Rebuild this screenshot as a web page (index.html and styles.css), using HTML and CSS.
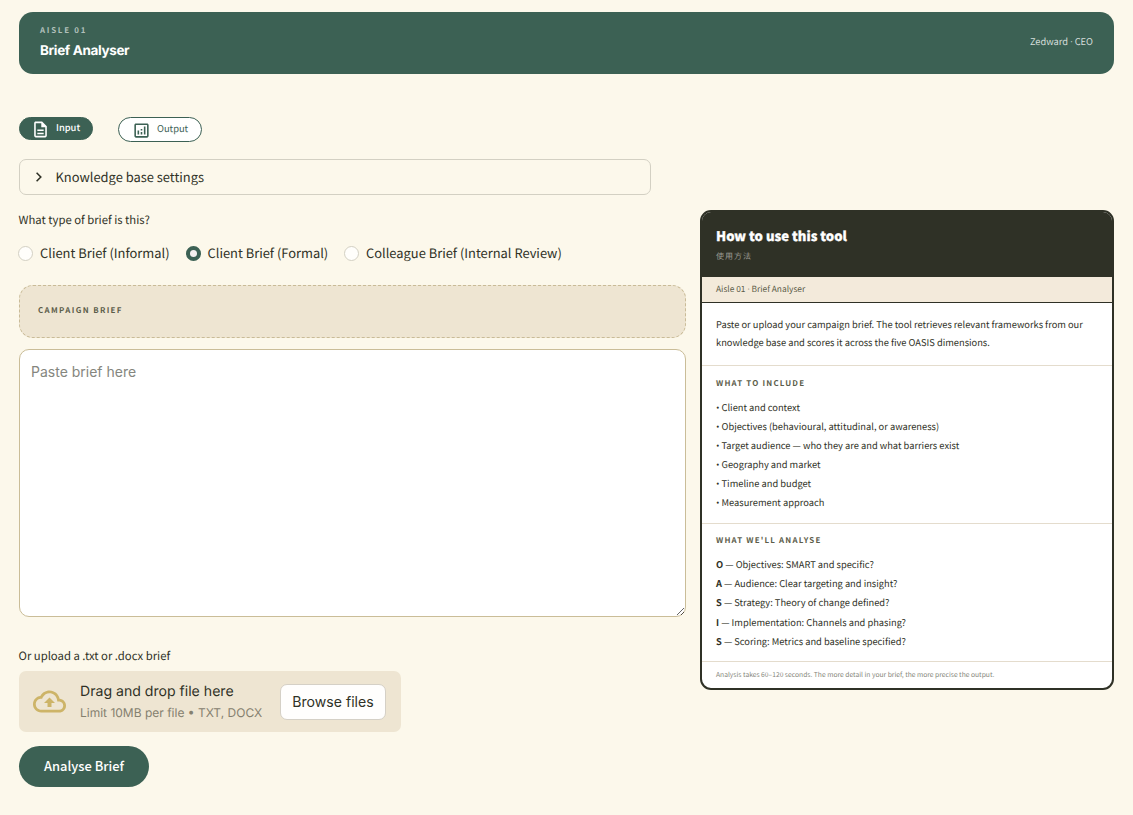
FILE: index.html
```html
<!DOCTYPE html>
<html lang="en">
<head>
  <meta charset="UTF-8" />
  <meta name="viewport" content="width=device-width, initial-scale=1.0" />
  <title>Brief Analyser</title>
  <link rel="stylesheet" href="styles.css">
</head>
<body>

<header class="topbar">
  <div>
    <div class="eyebrow"><span>AISLE 01</span></div>
    <h1><span>Brief Analyser</span></h1>
  </div>
  <div class="user">Zedward <span class="dot">·</span> CEO</div>
</header>

<nav class="tabs">
  <a class="tab active">
    <svg viewBox="0 0 24 24"><path d="M8 16h8v2H8zm0-4h8v2H8zm6-10H6c-1.100 0-2 .9-2 2v16c0 1.100.89 2 1.990 2H18c1.100 0 2-.9 2-2V8zm4 18H6V4h7v5h5z"/></svg>
    <span>Input</span>
  </a>
  <a class="tab">
    <svg viewBox="0 0 24 24"><path d="M19 3H5c-1.100 0-2 .9-2 2v14c0 1.100.9 2 2 2h14c1.100 0 2-.9 2-2V5c0-1.100-.9-2-2-2zm0 16H5V5h14zM7 12h2v5H7zm8-5h2v10h-2zm-4 7h2v3h-2zm0-4h2v2h-2z"/></svg>
    <span>Output</span>
  </a>
</nav>

<div class="layout">
  <main>
    <div class="expander">
      <svg viewBox="0 0 10 10"><path d="M3 1.500L6.500 5L3 8.500"/></svg>
      <span>Knowledge base settings</span>
    </div>

    <div class="label">What type of brief is this?</div>
    <div class="radios">
      <label class="r1"><i></i><span>Client Brief (Informal)</span></label>
      <label class="r2"><i class="on"></i><span>Client Brief (Formal)</span></label>
      <label class="r3"><i></i><span>Colleague Brief (Internal Review)</span></label>
    </div>

    <div class="brief-head"><span>CAMPAIGN BRIEF</span></div>
    <textarea placeholder="Paste brief here"></textarea>

    <div class="label upload-label">Or upload a .txt or .docx brief</div>
    <div class="uploader">
      <svg viewBox="0 0 24 24"><path d="M19.350 10.040C18.670 6.590 15.640 4 12 4 9.110 4 6.600 5.640 5.350 8.040 2.340 8.360 0 10.910 0 14c0 3.310 2.690 6 6 6h13c2.760 0 5-2.240 5-5 0-2.640-2.050-4.780-4.650-4.960zM19 18H6c-2.210 0-4-1.790-4-4 0-2.050 1.530-3.760 3.560-3.970l1.070-.11.500-.95C8.080 7.140 9.940 6 12 6c2.620 0 4.880 1.860 5.390 4.430l.3 1.500 1.530.11c1.560.1 2.780 1.410 2.780 2.960 0 1.650-1.350 3-3 3zM8 13h2.550v3h2.900v-3H16l-4-4z"/></svg>
      <div class="drop-text">
        <div class="drop-title"><span>Drag and drop file here</span></div>
        <div class="drop-limit"><span>Limit 10MB per file • TXT, DOCX</span></div>
      </div>
      <button class="browse"><span>Browse files</span></button>
    </div>

    <button class="analyse"><span>Analyse Brief</span></button>
  </main>

  <aside class="guide">
    <div class="guide-head">
      <h2><span>How to use this tool</span></h2>
      <div class="zh" lang="zh">使用方法</div>
    </div>
    <div class="guide-strip">Aisle 01 <span class="dot">·</span> Brief Analyser</div>
    <p class="guide-intro">Paste or upload your campaign brief. The tool retrieves relevant frameworks from our<br>knowledge base and scores it across the five OASIS dimensions.</p>
    <section class="include">
      <h3>WHAT TO INCLUDE</h3>
      <div><span class="bullet">•</span>Client and context</div>
      <div><span class="bullet">•</span>Objectives (behavioural, attitudinal, or awareness)</div>
      <div><span class="bullet">•</span>Target audience — who they are and what barriers exist</div>
      <div><span class="bullet">•</span>Geography and market</div>
      <div><span class="bullet">•</span>Timeline and budget</div>
      <div><span class="bullet">•</span>Measurement approach</div>
    </section>
    <section class="oasis">
      <h3>WHAT WE'LL ANALYSE</h3>
      <div><b>O</b> — Objectives: SMART and specific?</div>
      <div><b>A</b> — Audience: Clear targeting and insight?</div>
      <div><b>S</b> — Strategy: Theory of change defined?</div>
      <div><b>I</b> — Implementation: Channels and phasing?</div>
      <div><b>S</b> — Scoring: Metrics and baseline specified?</div>
    </section>
    <div class="guide-foot">Analysis takes 60–120 seconds. The more detail in your brief, the more precise the output.</div>
  </aside>
</div>

</body>
</html>
```
FILE: styles.css
```css
* { box-sizing: border-box; }
body {
  margin: 0;
  padding: 12px 19px 0;
  height: 815px;
  overflow: hidden;
  background: #fcf8eb;
  color: #2f3126;
  font-family: "Noto Sans CJK TC", "Noto Sans", sans-serif;
  text-rendering: geometricPrecision;
}
h1, h2, h3, p { margin: 0; }
span { white-space: nowrap; }
.dot { font-family: "Open Sans", sans-serif; }

.topbar {
  display: flex;
  justify-content: space-between;
  align-items: center;
  height: 62px;
  padding: 0 21px;
  border-radius: 14px;
  background: #3c6154;
  color: #fff;
}
.eyebrow {
  font-size: 7.900px; line-height: 12px; font-weight: 700;
  letter-spacing: 1.750px; color: #b1c0bb;
}
h1 {
  margin-top: 4px;
  font-family: Inter, sans-serif;
  font-size: 13.500px; line-height: 20px; font-weight: 700;
  letter-spacing: -0.350px;
}
.user { font-size: 9.300px; line-height: 14px; color: #d5deda; margin-bottom: 3px; }

.tabs { display: flex; align-items: flex-start; gap: 25px; margin-top: 43px; }
.tab {
  display: flex; align-items: center; gap: 6px;
  height: 23px; padding: 0 0 0 11px;
  border-radius: 13px;
  font-size: 9.350px; line-height: 14px;
  color: #3c6154; background: #fff;
  border: 1px solid #3c6154;
}
.tab svg { width: 19px; height: 19px; fill: currentColor; position: relative; top: 1px; }
.tab:not(.active) { height: 25px; width: 84px; padding-left: 13px; }
.tab.active { background: #3c6154; color: #fff; width: 74px; font-weight: 500; }
.tab span { position: relative; top: -2px; }

.layout {
  display: grid;
  grid-template-columns: 667px 414px;
  gap: 14px;
  align-items: start;
  margin-top: 17px;
}

.expander {
  display: flex; align-items: center; gap: 10.500px;
  width: 632px; height: 36px; padding: 0 13px;
  border: 1px solid #d3d0c3; border-radius: 7px;
  font-size: 12.900px; line-height: 20px;
}
.expander svg { width: 12px; height: 12px; fill: none; stroke: #2f3126; stroke-width: 1.300; }

.label { font-size: 11.300px; line-height: 18px; margin-top: 16px; text-indent: -0.500px; }
.radios { display: flex; margin-top: 14px; font-size: 12.900px; line-height: 20px; }
.radios label { display: flex; align-items: center; gap: 7px; }
.radios .r1 { width: 167.500px; }
.radios .r2 { width: 158.500px; }
.radios i {
  width: 15px; height: 15px; margin-left: -1px; border-radius: 50%;
  background: #fffefb; border: 1px solid #d3d0c3;
}
.radios i.on { background: #f4f0ef; border: 4.500px solid #3c6154; }

.brief-head {
  display: flex; align-items: center;
  height: 53px; margin-top: 22px; padding: 0 18px 2px;
  border: 1px dashed #c9bb97; border-radius: 14px;
  background: #eee5d2;
  font-size: 7.900px; line-height: 12px; font-weight: 700; letter-spacing: 1.370px;
  color: #5c5d4a;
}
textarea {
  display: block;
  width: 667px; height: 268px; margin-top: 11px; padding: 12px 11px;
  border: 1px solid #cabd98; border-radius: 10px;
  background: #fff; outline: none;
  font-family: Inter, sans-serif; font-size: 14px; line-height: 20px;
}
textarea::placeholder { color: #85867e; }

.upload-label { margin-top: 30px; }
.uploader {
  display: flex; align-items: center;
  width: 382px; height: 61px; margin-top: 6px; padding: 0 15px 0 14px;
  background: #eee5d2; border-radius: 7px;
  font-family: Inter, sans-serif;
}
.uploader svg { width: 33px; height: 33px; fill: #cdb468; flex: none; }
.drop-text { margin-left: 14px; flex: 1; }
.drop-title { font-size: 14.100px; line-height: 22px; }
.drop-limit { font-size: 12px; line-height: 20px; color: #85806f; }
.browse {
  width: 106px; height: 36px; padding: 0;
  border: 1px solid #d5d0c6; border-radius: 7px;
  background: #fffefd; color: #2f3126;
  font-family: Inter, sans-serif; font-size: 14.100px;
}
.analyse {
  display: block; width: 130px; height: 41px; margin-top: 14px; padding: 0 0 2px;
  border: 0; border-radius: 21px;
  background: #3c6154; color: #fff;
  font-family: "Noto Sans CJK TC", sans-serif; font-size: 12.900px; font-weight: 500;
}

.guide {
  height: 480px; margin-top: 51px;
  border: 2px solid #2f3126; border-radius: 11px;
  background: #fff; overflow: hidden;
  font-size: 9.300px;
}
.guide-head { height: 65px; padding: 14px 14px 0; background: #2f3126; color: #fff; }
h2 { font-size: 13.100px; line-height: 20px; font-weight: 900; -webkit-text-stroke: 0.300px #fff; }
.zh { font-size: 8px; line-height: 12px; margin-top: 5px; letter-spacing: 1px; color: #9a9b93; }
.guide-strip {
  height: 26px; padding: 0 14px;
  background: #f3eadb; border-bottom: 1px solid #2f3126;
  font-size: 8.400px; line-height: 24px; color: #5c5d4a;
}
.guide-intro { height: 62px; padding: 12px 14px 0; line-height: 18px; }
.guide section { padding: 11px 14px 0; border-top: 1px solid #e4dccd; line-height: 19px; }
.guide .include { height: 158px; }
.guide .oasis { height: 138px; padding-top: 10px; line-height: 19.200px; }
.bullet {
  display: inline-block; width: 5.500px;
  font-family: "Open Sans", sans-serif; font-size: 9.300px; line-height: 10px;
}
h3 { font-size: 7.900px; line-height: 13px; font-weight: 700; letter-spacing: 1.200px; color: #5c5d4a; margin-bottom: 8px; }
.guide-foot {
  padding: 0 14px; border-top: 1px solid #e4dccd;
  font-size: 6.720px; line-height: 25px; color: #85867a;
}
```
